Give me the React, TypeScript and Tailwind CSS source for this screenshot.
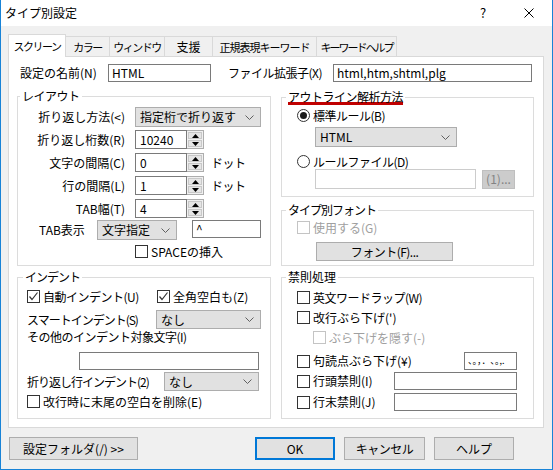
import React from 'react';

function Chevron() {
  return (
    <svg width="9" height="5" viewBox="0 0 9 5" className="shrink-0">
      <polyline points="0.5,0.5 4.5,4.5 8.5,0.5" fill="none" stroke="#606060" strokeWidth="1" />
    </svg>
  );
}

function Check({ checked = false, disabled = false }: { checked?: boolean; disabled?: boolean }) {
  return (
    <span
      className={`w-[13px] h-[13px] shrink-0 border bg-white flex items-center justify-center ${
        disabled ? 'border-[#c4c4c4]' : 'border-[#333333]'
      }`}
    >
      {checked && (
        <svg width="11" height="11" viewBox="0 0 11 11">
          <polyline points="1.5,5.5 4,8.5 9.5,1.5" fill="none" stroke="#333333" strokeWidth="1.2" />
        </svg>
      )}
    </span>
  );
}

function Radio({ checked = false }: { checked?: boolean }) {
  return (
    <span className="w-[13px] h-[13px] shrink-0 rounded-full border border-[#333333] bg-white flex items-center justify-center">
      {checked && <span className="w-[7px] h-[7px] rounded-full bg-[#1a1a1a]" />}
    </span>
  );
}

function Combo({ text, className }: { text: string; className: string }) {
  return (
    <div className={`flex items-center justify-between bg-[#e1e1e1] border border-[#adadad] pl-[4px] pr-[6px] whitespace-nowrap ${className}`}>
      <span>{text}</span>
      <Chevron />
    </div>
  );
}

function TextBox({ value = '', className, disabled = false }: { value?: string; className: string; disabled?: boolean }) {
  return (
    <div
      className={`flex items-center bg-white border px-[3px] whitespace-nowrap overflow-hidden ${
        disabled ? 'border-[#cccccc]' : 'border-[#7a7a7a]'
      } ${className}`}
    >
      {value}
    </div>
  );
}

function Spin({ value }: { value: string }) {
  return (
    <div className="flex h-[19px] w-[69px] shrink-0">
      <div className="flex items-center w-[52px] h-full border border-[#7a7a7a] bg-white pl-[4px]">{value}</div>
      <div className="flex flex-col w-[17px] h-full border-y border-r border-[#adadad] bg-[#f0f0f0] p-[1px] gap-[1px]">
        <div className="flex-1 flex items-center justify-center border border-[#c8c8c8] bg-[#e5e5e5]">
          <svg width="7" height="4" viewBox="0 0 7 4">
            <polygon points="0,4 3.5,0 7,4" fill="#000" />
          </svg>
        </div>
        <div className="flex-1 flex items-center justify-center border border-[#c8c8c8] bg-[#e5e5e5]">
          <svg width="7" height="4" viewBox="0 0 7 4">
            <polygon points="0,0 3.5,4 7,0" fill="#000" />
          </svg>
        </div>
      </div>
    </div>
  );
}

function Btn({ children, className }: { children: React.ReactNode; className: string }) {
  return (
    <div className={`flex items-center justify-center bg-[#e1e1e1] border border-[#adadad] whitespace-nowrap ${className}`}>{children}</div>
  );
}

export default function App() {
  return (
    <div className="w-[553px] h-[470px] flex flex-col bg-[#f0f0f0] border-x border-b border-[#1883d7] text-[12px] leading-[14px] text-black font-['Noto_Sans_CJK_JP','Noto_Sans',sans-serif] overflow-hidden whitespace-nowrap">
      {/* title bar */}
      <div className="h-[26px] shrink-0 bg-white flex items-center">
        <span className="pl-[4px] flex-1">タイプ別設定</span>
        <div className="w-[46px] h-full flex items-center justify-center text-[13px]">?</div>
        <div className="w-[46px] h-full flex items-center justify-center">
          <svg width="10" height="10" viewBox="0 0 10 10">
            <path d="M0.5 0.5 L9.5 9.5 M9.5 0.5 L0.5 9.5" stroke="#000" strokeWidth="1" />
          </svg>
        </div>
      </div>

      <div className="flex flex-col pl-[7px] pr-[8px]">
        {/* tabs */}
        <div className="flex items-end h-[22px] mt-[8px] relative z-10">
          <div className="h-[23px] mb-[-1px] w-[58px] bg-white border-x border-t border-[#d9d9d9] flex items-center justify-center text-[11px] tracking-[-1.5px]">
            スクリーン
          </div>
          <div className="h-[20px] w-[44px] border-t border-r border-[#d9d9d9] flex items-center justify-center text-[11px] tracking-[-1.5px]">カラー</div>
          <div className="h-[20px] w-[55px] border-t border-r border-[#d9d9d9] flex items-center justify-center text-[11px] tracking-[-1.5px]">ウィンドウ</div>
          <div className="h-[20px] w-[48px] border-t border-r border-[#d9d9d9] flex items-center justify-center">支援</div>
          <div className="h-[20px] w-[104px] border-t border-r border-[#d9d9d9] flex items-center justify-center text-[11px] tracking-[-1px]">正規表現キーワード</div>
          <div className="h-[20px] w-[80px] border-t border-r border-[#d9d9d9] flex items-center justify-center text-[11px] tracking-[-2px]">キーワードヘルプ</div>
        </div>

        {/* panel */}
        <div className="h-[372px] bg-white border border-[#d9d9d9] flex flex-col">
          <div className="flex items-center h-[18px] mt-[7px] pl-[11px]">
            <span className="w-[88px]">設定の名前(N)</span>
            <TextBox value="HTML" className="w-[103px] h-[18px]" />
            <span className="w-[105px] ml-[17px] tracking-[-0.5px]">ファイル拡張子(X)</span>
            <TextBox value="html,htm,shtml,plg" className="w-[199px] h-[18px]" />
          </div>

          <div className="flex gap-[10px] px-[8px] mt-[7px]">
            {/* left column */}
            <div className="w-[254px] flex flex-col">
              <fieldset className="h-[177px] border border-[#dcdcdc] min-w-0">
                <legend className="ml-[2px] px-[2px] leading-[14px] tracking-[-0.5px]">レイアウト</legend>
                <div className="flex flex-col">
                  <div className="flex items-center h-[20px] mt-[4px]">
                    <span className="w-[107px] text-right">折り返し方法(&lt;)</span>
                    <Combo text="指定桁で折り返す" className="w-[126px] h-[20px] ml-[10px]" />
                  </div>
                  <div className="flex items-center h-[19px] mt-[3px]">
                    <span className="w-[107px] text-right">折り返し桁数(R)</span>
                    <div className="ml-[10px]"><Spin value="10240" /></div>
                  </div>
                  <div className="flex items-center h-[19px] mt-[4px]">
                    <span className="w-[107px] text-right">文字の間隔(C)</span>
                    <div className="ml-[10px]"><Spin value="0" /></div>
                    <span className="ml-[7px] tracking-[-0.5px]">ドット</span>
                  </div>
                  <div className="flex items-center h-[19px] mt-[4px]">
                    <span className="w-[107px] text-right">行の間隔(L)</span>
                    <div className="ml-[10px]"><Spin value="1" /></div>
                    <span className="ml-[7px] tracking-[-0.5px]">ドット</span>
                  </div>
                  <div className="flex items-center h-[19px] mt-[4px]">
                    <span className="w-[107px] text-right">TAB幅(T)</span>
                    <div className="ml-[10px]"><Spin value="4" /></div>
                  </div>
                  <div className="flex items-center h-[20px] mt-[2px] pl-[21px]">
                    <span className="w-[58px]">TAB表示</span>
                    <Combo text="文字指定" className="w-[80px] h-[20px]" />
                    <TextBox value="^" className="w-[69px] h-[18px] ml-[15px] self-start" />
                  </div>
                  <div className="flex items-center h-[13px] mt-[5px] pl-[117px]">
                    <Check />
                    <span className="ml-[3px]">SPACEの挿入</span>
                  </div>
                </div>
              </fieldset>

              <fieldset className="h-[149px] mt-[4px] border border-[#dcdcdc] min-w-0">
                <legend className="ml-[5px] px-[2px] leading-[14px] tracking-[-1px]">インデント</legend>
                <div className="flex flex-col">
                  <div className="flex items-center h-[13px] mt-[6px] pl-[9px]">
                    <div className="w-[130px] flex items-center">
                      <Check checked />
                      <span className="ml-[3px] tracking-[-0.5px]">自動インデント(U)</span>
                    </div>
                    <Check checked />
                    <span className="ml-[3px]">全角空白も(Z)</span>
                  </div>
                  <div className="flex items-center h-[19px] mt-[7px] pl-[9px]">
                    <span className="w-[129px] tracking-[-1px]">スマートインデント(S)</span>
                    <Combo text="なし" className="w-[105px] h-[19px]" />
                  </div>
                  <div className="flex items-center h-[16px] pl-[9px] tracking-[-0.5px]">その他のインデント対象文字(I)</div>
                  <div className="flex h-[18px] mt-[7px] pl-[61px]">
                    <TextBox className="w-[180px] h-[18px]" />
                  </div>
                  <div className="flex items-center h-[19px] mt-[2px] pl-[9px]">
                    <span className="w-[137px] tracking-[-1px]">折り返し行インデント(2)</span>
                    <Combo text="なし" className="w-[95px] h-[19px]" />
                  </div>
                  <div className="flex items-center h-[13px] mt-[4px] pl-[9px]">
                    <Check />
                    <span className="ml-[3px]">改行時に末尾の空白を削除(E)</span>
                  </div>
                </div>
              </fieldset>
            </div>

            {/* right column */}
            <div className="w-[253px] flex flex-col pt-[1px]">
              <fieldset className="h-[107px] border border-[#dcdcdc] min-w-0">
                <legend className="ml-[4px] px-[2px] leading-[14px]">
                  <span className="underline decoration-[3px] decoration-[#c00000] underline-offset-[0px] tracking-[-0.5px]">アウトライン解析方法</span>
                </legend>
                <div className="flex flex-col">
                  <div className="flex items-center h-[13px] mt-[5px] pl-[15px]">
                    <Radio checked />
                    <span className="ml-[3px] tracking-[-0.5px]">標準ルール(B)</span>
                  </div>
                  <div className="flex h-[20px] mt-[5px] pl-[33px]">
                    <Combo text="HTML" className="w-[142px] h-[20px]" />
                  </div>
                  <div className="flex items-center h-[13px] mt-[8px] pl-[15px]">
                    <Radio />
                    <span className="ml-[3px] tracking-[-0.5px]">ルールファイル(D)</span>
                  </div>
                  <div className="flex items-center h-[20px] mt-[1px] pl-[33px]">
                    <TextBox disabled className="w-[161px] h-[20px]" />
                    <Btn className="w-[33px] h-[19px] ml-[6px] !bg-[#cccccc] !border-[#bfbfbf] text-[#838383]">(1)...</Btn>
                  </div>
                </div>
              </fieldset>

              <fieldset className="h-[63px] mt-[6px] border border-[#dcdcdc] min-w-0">
                <legend className="ml-[4px] px-[2px] leading-[14px] tracking-[-1px]">タイプ別フォント</legend>
                <div className="flex flex-col">
                  <div className="flex items-center h-[13px] mt-[4px] pl-[15px]">
                    <Check disabled />
                    <span className="ml-[3px] text-[#a0a0a0]">使用する(G)</span>
                  </div>
                  <div className="flex h-[19px] mt-[8px] pl-[34px]">
                    <Btn className="w-[137px] h-[19px] tracking-[-0.5px]">フォント(F)...</Btn>
                  </div>
                </div>
              </fieldset>

              <fieldset className="h-[149px] mt-[4px] border border-[#dcdcdc] min-w-0">
                <legend className="ml-[4px] px-[2px] leading-[14px]">禁則処理</legend>
                <div className="flex flex-col">
                  <div className="flex items-center h-[13px] mt-[7px] pl-[15px]">
                    <Check />
                    <span className="ml-[3px] tracking-[-0.5px]">英文ワードラップ(W)</span>
                  </div>
                  <div className="flex items-center h-[13px] mt-[7px] pl-[15px]">
                    <Check />
                    <span className="ml-[3px]">改行ぶら下げ(')</span>
                  </div>
                  <div className="flex items-center h-[13px] mt-[7px] pl-[31px]">
                    <Check disabled />
                    <span className="ml-[3px] text-[#a0a0a0]">ぶら下げを隠す(-)</span>
                  </div>
                  <div className="flex items-center h-[18px] mt-[8px] pl-[15px]">
                    <div className="w-[167px] flex items-center">
                      <Check />
                      <span className="ml-[3px]">句読点ぶら下げ(¥)</span>
                    </div>
                    <TextBox value="、。，．､｡,." className="w-[53px] h-[18px] text-[9px]" />
                  </div>
                  <div className="flex items-center h-[18px] mt-[2px] pl-[15px]">
                    <div className="w-[97px] flex items-center">
                      <Check />
                      <span className="ml-[3px]">行頭禁則(I)</span>
                    </div>
                    <TextBox className="w-[123px] h-[18px]" />
                  </div>
                  <div className="flex items-center h-[18px] mt-[3px] pl-[15px]">
                    <div className="w-[97px] flex items-center">
                      <Check />
                      <span className="ml-[3px]">行末禁則(J)</span>
                    </div>
                    <TextBox className="w-[123px] h-[18px]" />
                  </div>
                </div>
              </fieldset>
            </div>
          </div>
        </div>

        {/* bottom buttons */}
        <div className="flex h-[23px] mt-[9px]">
          <Btn className="w-[129px] h-[23px] ml-[1px]">設定フォルダ(/) &gt;&gt;</Btn>
          <Btn className="w-[80px] h-[23px] ml-[117px] !border-2 !border-[#0078d7]">OK</Btn>
          <Btn className="w-[81px] h-[23px] ml-[9px] tracking-[-0.5px]">キャンセル</Btn>
          <Btn className="w-[80px] h-[23px] ml-[9px]">ヘルプ</Btn>
        </div>
      </div>
    </div>
  );
}
